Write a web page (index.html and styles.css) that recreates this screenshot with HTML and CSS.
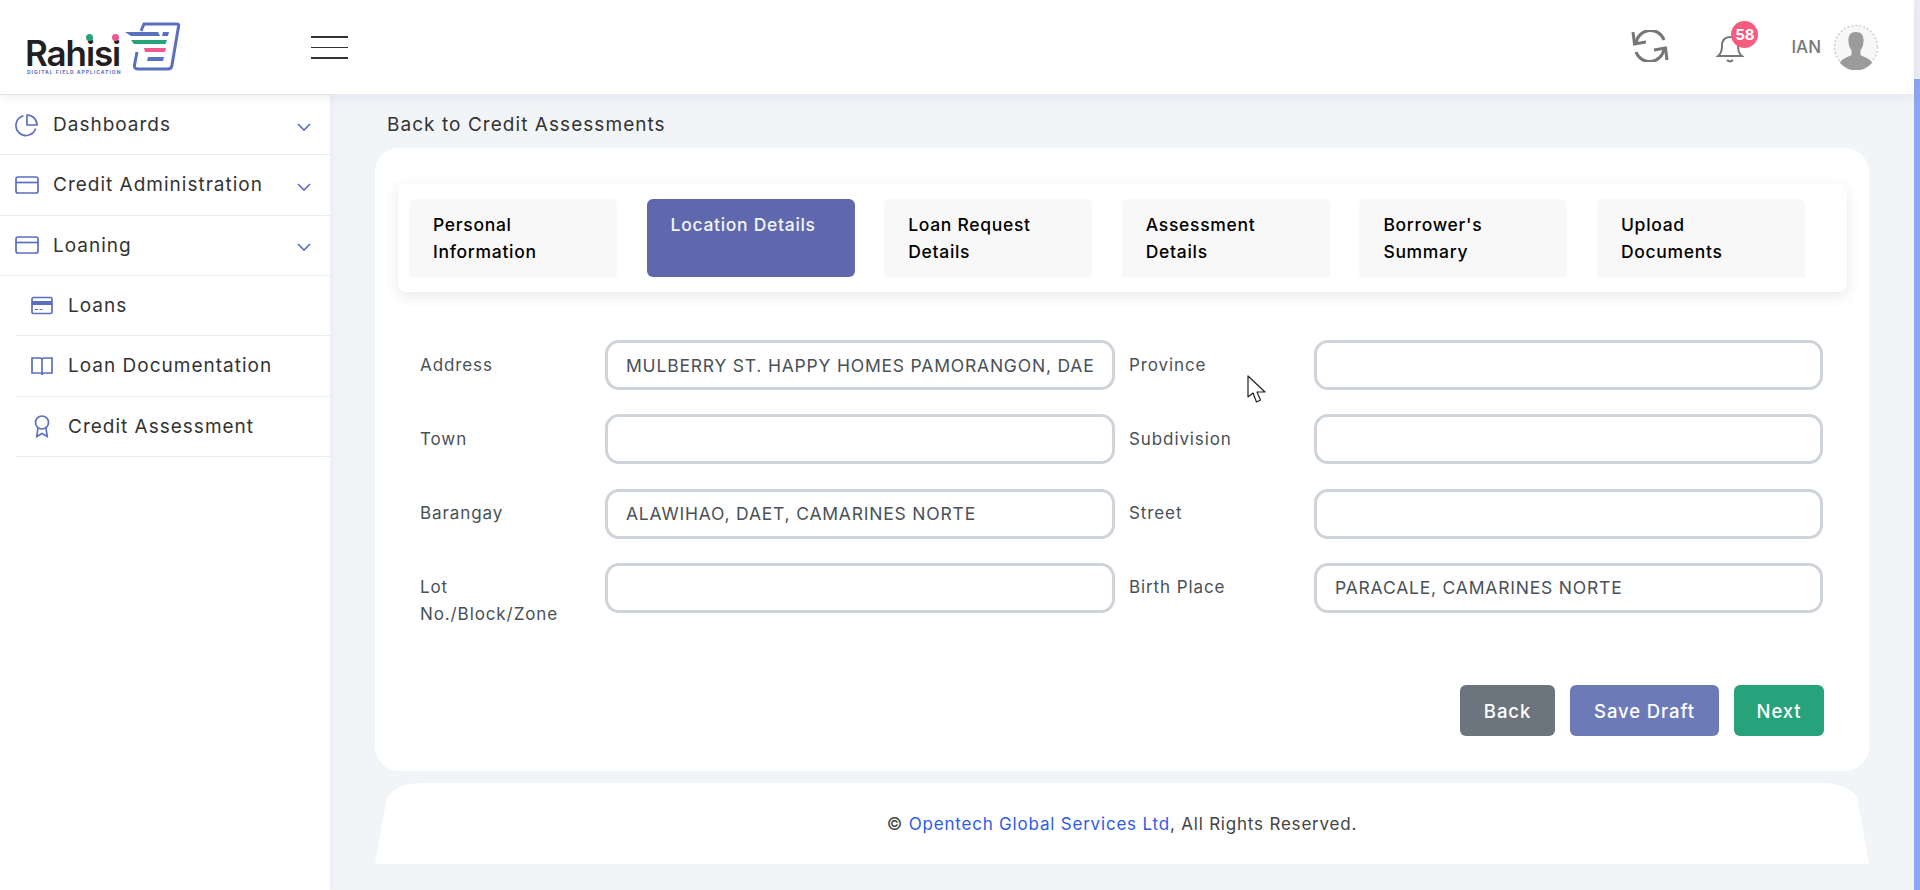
FILE: index.html
```html
<!DOCTYPE html>
<html lang="en">
<head>
    <meta charset="UTF-8">
    <meta name="viewport" content="width=device-width, initial-scale=1.0">
    <title>Rahisi - Location Details</title>
    <link rel="stylesheet" href="styles.css">
</head>
<body>
    <div class="app">
        <header class="topbar">
            <div class="logo">
                <span class="logo-name">Rah<span class="logo-i i-green">i</span>s<span class="logo-i i-pink">i</span></span>
                <span class="logo-tag">DIGITAL FIELD APPLICATION</span>
                <svg class="logo-mark" width="60" height="55" viewBox="0 0 60 55">
                    <path d="M21 12 L24 5 H57 Q59 5 58.600 7 L52 46 Q51.500 50 48 50 H18 Q14 50 14.500 46 L17 33" fill="none" stroke="#5b6fc0" stroke-width="3"/>
                    <path d="M5 13 H38 L40 17 H11 Z" fill="#5b6fc0"/>
                    <path d="M43 13 H49 L48 17 H42 Z" fill="#5b6fc0"/>
                    <path d="M11 21 H47 L45.500 25 H14 Z" fill="#26a37a"/>
                    <path d="M24 29 H46 L45 33 H25 Z" fill="#ee5a8f"/>
                    <path d="M28 38 H44 L43 42 H27 Z" fill="#5b6fc0"/>
                </svg>
            </div>
            <div class="burger">
                <span class="burger-line"></span>
                <span class="burger-line thin"></span>
                <span class="burger-line"></span>
            </div>
            <div class="top-actions">
                <svg class="sync-icon" width="38" height="32" viewBox="0 0 38 32" fill="none" stroke="#777" stroke-width="3">
                    <path d="M33 10 A14.500 14.500 0 0 0 5 13"/>
                    <path d="M2 2 L3.500 14 L15 12"/>
                    <path d="M5 22 A14.500 14.500 0 0 0 33 19"/>
                    <path d="M36 30 L34.500 18 L23 20"/>
                </svg>
                <div class="bell">
                    <svg width="28" height="30" viewBox="0 0 28 30" fill="none" stroke="#777" stroke-width="2">
                        <path d="M2 22 Q6 19 6 12 Q6 3 14 3 Q22 3 22 12 Q22 19 26 22 Z"/>
                        <path d="M11 26 Q14 29 17 26"/>
                    </svg>
                    <span class="badge">58</span>
                </div>
                <span class="user-name">IAN</span>
                <svg class="avatar" width="46" height="46" viewBox="0 0 46 46">
                    <circle cx="23" cy="23" r="21.500" fill="#f7f7f7" stroke="#cfcfcf" stroke-width="1.500" stroke-dasharray="2 2"/>
                    <path d="M23 8 C29 8 31 12 30.500 18 C30.200 22 29 24 27.500 26.500 L27.500 31 C31 33.500 37 34 39 39 A21 21 0 0 1 7 39 C9 34 15 33.500 18.500 31 L18.500 26.500 C17 24 15.800 22 15.500 18 C15 12 17 8 23 8 Z" fill="#9b9b9b"/>
                </svg>
            </div>
        </header>

        <div class="body-row">
            <nav class="sidebar">
                <a class="nav-item">
                    <svg class="nav-icon" width="24" height="24" viewBox="0 0 24 24"><path d="M20.500 15.500A10 10 0 1 1 8.500 2.800"/><path d="M22 12A10 10 0 0 0 12 2v10z"/></svg>
                    <span class="nav-label">Dashboards</span>
                    <svg class="chevron" width="16" height="10" viewBox="0 0 16 10"><path d="M2 2l6 6 6-6"/></svg>
                </a>
                <a class="nav-item">
                    <svg class="nav-icon" width="24" height="24" viewBox="0 0 24 24"><rect x="1" y="4" width="22" height="16" rx="2"/><path d="M1 9.500h22"/></svg>
                    <span class="nav-label">Credit Administration</span>
                    <svg class="chevron" width="16" height="10" viewBox="0 0 16 10"><path d="M2 2l6 6 6-6"/></svg>
                </a>
                <a class="nav-item">
                    <svg class="nav-icon" width="24" height="24" viewBox="0 0 24 24"><rect x="1" y="4" width="22" height="16" rx="2"/><path d="M1 9.500h22"/></svg>
                    <span class="nav-label">Loaning</span>
                    <svg class="chevron" width="16" height="10" viewBox="0 0 16 10"><path d="M2 2l6 6 6-6"/></svg>
                </a>
                <a class="nav-item sub">
                    <svg class="nav-icon" width="24" height="24" viewBox="0 0 24 24"><rect x="2" y="3.500" width="20" height="16" rx="1.500"/><path d="M2 9h20" stroke-width="4"/><path d="M5 15.500h3M9.500 15.500h3" stroke-width="1"/></svg>
                    <span class="nav-label">Loans</span>
                </a>
                <a class="nav-item sub">
                    <svg class="nav-icon" width="24" height="24" viewBox="0 0 24 24"><path d="M2 4h8q2 0 2 2v15q0-2-2-2H2zM22 4h-8q-2 0-2 2v15q0-2 2-2h8z"/></svg>
                    <span class="nav-label">Loan Documentation</span>
                </a>
                <a class="nav-item sub">
                    <svg class="nav-icon" width="24" height="24" viewBox="0 0 24 24"><circle cx="12" cy="8.500" r="6.500"/><path d="M8 14l-1.200 8.500L12 19.500l5.200 3L16 14"/></svg>
                    <span class="nav-label">Credit Assessment</span>
                </a>
            </nav>

            <main class="content">
                <a class="back-link">Back to Credit Assessments</a>

                <section class="card">
                    <div class="tabs">
                        <div class="tab">Personal Information</div>
                        <div class="tab active">Location Details</div>
                        <div class="tab">Loan Request Details</div>
                        <div class="tab">Assessment Details</div>
                        <div class="tab">Borrower's Summary</div>
                        <div class="tab">Upload Documents</div>
                    </div>

                    <form class="form-grid">
                        <label class="field"><span class="field-label">Address</span><input class="field-input" type="text" value="MULBERRY ST. HAPPY HOMES PAMORANGON, DAET, CAMARINES NORTE"></label>
                        <label class="field"><span class="field-label">Province</span><input class="field-input" type="text"></label>
                        <label class="field"><span class="field-label">Town</span><input class="field-input" type="text"></label>
                        <label class="field"><span class="field-label">Subdivision</span><input class="field-input" type="text"></label>
                        <label class="field"><span class="field-label">Barangay</span><input class="field-input" type="text" value="ALAWIHAO, DAET, CAMARINES NORTE"></label>
                        <label class="field"><span class="field-label">Street</span><input class="field-input" type="text"></label>
                        <label class="field"><span class="field-label">Lot No./Block/Zone</span><input class="field-input" type="text"></label>
                        <label class="field"><span class="field-label">Birth Place</span><input class="field-input" type="text" value="PARACALE, CAMARINES NORTE"></label>
                    </form>

                    <div class="actions">
                        <button class="btn btn-back" type="button">Back</button>
                        <button class="btn btn-draft" type="button">Save Draft</button>
                        <button class="btn btn-next" type="button">Next</button>
                    </div>
                </section>

                <footer class="footer">
                    <span>© <a class="footer-link">Opentech Global Services Ltd</a>, All Rights Reserved.</span>
                </footer>
            </main>
        </div>

        <svg class="cursor" width="20" height="29" viewBox="0 0 20 29">
            <path d="M1 1 V22 L6 18 L9.500 27 L13.500 25 L10 17 H18 Z" fill="#fff" stroke="#222" stroke-width="1.200" stroke-linejoin="round"/>
        </svg>
    </div>

    <div class="scrollbar"><div class="scroll-thumb"></div></div>
</body>
</html>
```

FILE: styles.css
```css
* {
    box-sizing: border-box;
}
html, body {
    height: 100%;
}
body {
    margin: 0;
    display: flex;
    overflow: hidden;
    font-family: Inter, "Liberation Sans", sans-serif;
    background-color: #f2f5f8;
    color: #333;
}
.app {
    position: relative;
    flex: 1;
    display: flex;
    flex-direction: column;
    min-width: 0;
}

/* top bar */
.topbar {
    position: relative;
    z-index: 2;
    height: 94px;
    flex: none;
    display: flex;
    align-items: center;
    background-color: #fff;
    box-shadow: 0 2px 12px rgba(60, 70, 90, 0.1);
}
.logo {
    position: relative;
    width: 311px;
    height: 94px;
    flex: none;
}
.logo-name {
    position: absolute;
    left: 25px;
    top: 37px;
    font-size: 35px;
    line-height: 32px;
    font-weight: 600;
    letter-spacing: -1.1px;
    color: #231f20;
}
.logo-i {
    position: relative;
}
.logo-i::after {
    content: "";
    position: absolute;
    left: 50%;
    top: 2px;
    width: 7px;
    height: 7px;
    margin-left: -4px;
    border-radius: 50%;
}
.i-green::after {
    background-color: #26a37a;
}
.i-pink::after {
    background-color: #ee5a8f;
}
.logo-tag {
    position: absolute;
    left: 27px;
    top: 69px;
    font-size: 5px;
    line-height: 6px;
    font-weight: 700;
    letter-spacing: 1px;
    white-space: nowrap;
    color: #5b6fc0;
}
.logo-mark {
    position: absolute;
    left: 120px;
    top: 19px;
}
.burger {
    width: 37px;
    display: flex;
    flex-direction: column;
    gap: 9px;
}
.burger-line {
    height: 2px;
    background-color: #333;
}
.burger-line.thin {
    height: 1px;
}
.top-actions {
    margin-left: auto;
    padding-right: 35px;
    display: flex;
    align-items: center;
}
.sync-icon {
    margin-right: 47px;
    margin-top: -3px;
}
.bell {
    position: relative;
    width: 28px;
    height: 30px;
    margin-top: 4px;
    margin-right: 47px;
}
.bell svg {
    display: block;
}
.badge {
    position: absolute;
    left: 15px;
    top: -13px;
    width: 27px;
    height: 27px;
    border-radius: 50%;
    background-color: #f75c7e;
    color: #fff;
    font-size: 15px;
    font-weight: 700;
    line-height: 27px;
    text-align: center;
}
.user-name {
    margin-right: 12px;
    font-size: 17px;
    font-weight: 500;
    color: #777;
}

/* sidebar */
.body-row {
    flex: 1;
    display: flex;
    min-height: 0;
}
.sidebar {
    width: 330px;
    flex: none;
    background-color: #fff;
    border-top: 1px solid #e9ecef;
    box-shadow: 2px 0 8px rgba(60, 70, 90, 0.05);
}
.nav-item {
    height: 60.33px;
    display: flex;
    align-items: center;
    padding-left: 15px;
    padding-right: 18px;
    border-bottom: 1px solid #e9ecef;
}
.nav-item.sub {
    margin-left: 15px;
}
.nav-icon {
    flex: none;
    fill: none;
    stroke: #5b6fc0;
    stroke-width: 1.7;
    margin-right: 14px;
}
.nav-label {
    flex: 1;
    font-size: 19px;
    letter-spacing: 1px;
    color: #333;
}
.chevron {
    fill: none;
    stroke: #5b6fc0;
    stroke-width: 1.6;
    margin-top: 4px;
}

/* main area */
.content {
    flex: 1;
    min-width: 0;
    padding: 17px 45px 0;
}
.back-link {
    display: block;
    padding-left: 12px;
    font-size: 19px;
    letter-spacing: 1.05px;
    line-height: 27px;
    color: #333;
}
.card {
    height: 623px;
    margin-top: 10px;
    padding: 36px 22px 0 23px;
    background-color: #fff;
    border-radius: 24px;
}
.tabs {
    display: flex;
    gap: 29.6px;
    height: 108px;
    padding: 15px 11px;
    background-color: #fff;
    border-radius: 8px;
    box-shadow: 0 4px 14px rgba(60, 70, 90, 0.12);
}
.tab {
    width: 208px;
    flex: none;
    padding: 12px 24px;
    background-color: #f8f8f8;
    border-radius: 6px 6px 0 0;
    font-size: 17.5px;
    letter-spacing: 0.7px;
    font-weight: 500;
    line-height: 27px;
    color: #000;
}
.tab.active {
    background-color: #5f68ad;
    border-radius: 6px;
    color: #f4f4fb;
}

/* form */
.form-grid {
    display: grid;
    grid-template-columns: 709px 694px;
    row-gap: 24.3px;
    margin-top: 48px;
    padding-left: 22px;
}
.field {
    display: flex;
    align-items: flex-start;
}
.field-label {
    width: 185px;
    flex: none;
    padding-top: 11.5px;
    padding-right: 30px;
    font-size: 17px;
    letter-spacing: 0.9px;
    line-height: 27px;
    color: #495057;
}
.field-input {
    width: 510px;
    height: 50px;
    padding: 0 18px;
    border: 3px solid #ced4da;
    border-radius: 14px;
    background-color: #fff;
    font-family: inherit;
    font-size: 17.5px;
    letter-spacing: 0.8px;
    color: #495057;
    outline: none;
}

/* buttons */
.actions {
    display: flex;
    justify-content: flex-end;
    gap: 15px;
    margin-top: 57px;
    padding-right: 23px;
}
.btn {
    height: 51px;
    border: none;
    border-radius: 6px;
    font-family: inherit;
    font-size: 18.5px;
    letter-spacing: 0.9px;
    font-weight: 500;
    color: #fff;
    cursor: pointer;
}
.btn-back {
    width: 95px;
    background-color: #6c757d;
}
.btn-draft {
    width: 149px;
    background-color: #6c7ab8;
}
.btn-next {
    width: 90px;
    background-color: #26a37a;
}

/* footer */
.footer {
    height: 81px;
    margin-top: 12px;
    display: flex;
    align-items: center;
    justify-content: center;
    font-size: 17px;
    letter-spacing: 0.8px;
    color: #444;
    background-color: #fff;
    clip-path: path("M0 81 L12 14 Q24 0 46 0 H1448 Q1470 0 1482 14 L1494 81 Z");
}
.footer-link {
    color: #2f5bea;
}

/* mouse pointer from the capture */
.cursor {
    position: absolute;
    left: 1247px;
    top: 375px;
}

/* page scrollbar */
.scrollbar {
    width: 6px;
    flex: none;
    padding-top: 79px;
    background-color: #eef0f5;
}
.scroll-thumb {
    height: 100%;
    background-color: #8da6f2;
}
```
